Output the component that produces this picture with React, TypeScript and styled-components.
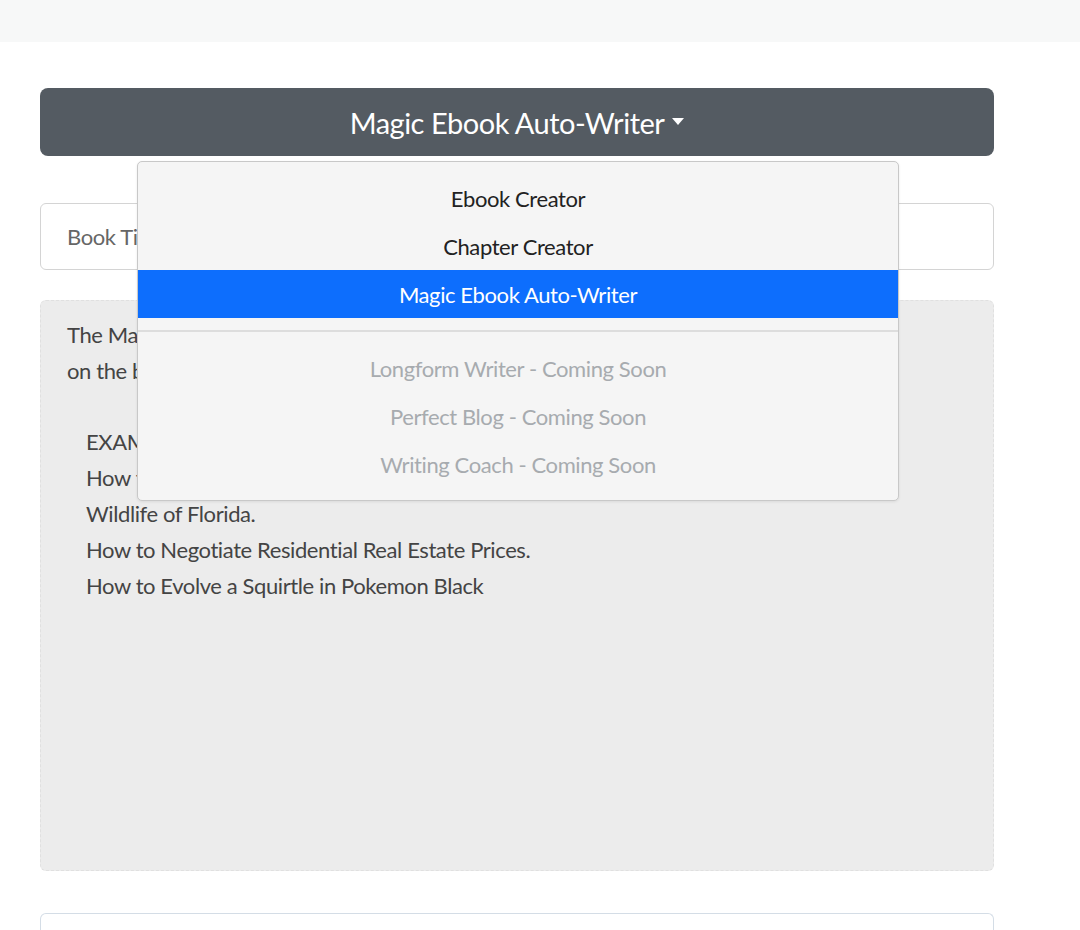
import React from "react";
import styled, { createGlobalStyle } from "styled-components";

const GlobalStyle = createGlobalStyle`
  body {
    margin: 0;
    background: #fff;
    font-family: Lato, "Open Sans", sans-serif;
    letter-spacing: -0.4px;
  }
`;

const TopBar = styled.div`
  height: 42px;
  background: #f7f8f8;
`;

const Main = styled.div`
  width: 954px;
  padding: 46px 0 0 40px;
  display: flex;
  flex-direction: column;
`;

const DropdownWrap = styled.div`
  position: relative;
`;

const ToggleButton = styled.button`
  width: 100%;
  height: 68px;
  border: none;
  border-radius: 8px;
  background: #545b62;
  color: #fff;
  font-family: inherit;
  letter-spacing: -0.5px;
  font-size: 29px;
  display: flex;
  align-items: center;
  justify-content: center;
  gap: 8px;
  &::after {
    content: "";
    border-top: 7px solid #fff;
    border-left: 6px solid transparent;
    border-right: 6px solid transparent;
    margin-top: -2px;
  }
`;

const Menu = styled.div`
  position: absolute;
  top: 73px;
  left: 97px;
  width: 760px;
  padding: 12px 0;
  background: #f5f5f5;
  border: 1px solid #c8c8c8;
  border-radius: 5px;
  box-shadow: 0 1px 3px rgba(0, 0, 0, 0.08);
  z-index: 10;
`;

const MenuItem = styled.div<{ $active?: boolean; $disabled?: boolean }>`
  height: 48px;
  display: flex;
  align-items: center;
  justify-content: center;
  font-size: 22px;
  background: ${(p) => (p.$active ? "#0d6efd" : "transparent")};
  color: ${(p) => (p.$active ? "#fff" : p.$disabled ? "#a7abaf" : "#222")};
`;

const Divider = styled.hr`
  margin: 12px 0;
  border: none;
  border-top: 2px solid #ddd;
`;

const TitleInput = styled.input`
  margin-top: 47px;
  height: 67px;
  box-sizing: border-box;
  border: 1px solid #d4d4d4;
  border-radius: 6px;
  padding: 0 26px;
  font-family: inherit;
  letter-spacing: -0.4px;
  font-size: 22px;
  color: #555;
  &::placeholder {
    color: #666;
  }
`;

const InfoBox = styled.div`
  margin-top: 30px;
  height: 571px;
  box-sizing: border-box;
  background: #ececec;
  border: 1px dashed #e0e0e0;
  border-radius: 6px;
  padding: 16px 40px 0 26px;
  font-size: 22px;
  line-height: 36px;
  color: #444;
`;

const ExampleList = styled.div`
  margin-top: 35px;
  padding-left: 19px;
`;

const BottomInput = styled.div`
  margin-top: 42px;
  height: 40px;
  border: 1px solid #d4dde6;
  border-bottom: none;
  border-radius: 6px 6px 0 0;
`;

export default function App() {
  return (
    <>
      <GlobalStyle />
      <TopBar />
      <Main>
        <DropdownWrap>
          <ToggleButton>Magic Ebook Auto-Writer</ToggleButton>
          <Menu>
            <MenuItem>Ebook Creator</MenuItem>
            <MenuItem>Chapter Creator</MenuItem>
            <MenuItem $active>Magic Ebook Auto-Writer</MenuItem>
            <Divider />
            <MenuItem $disabled>Longform Writer - Coming Soon</MenuItem>
            <MenuItem $disabled>Perfect Blog - Coming Soon</MenuItem>
            <MenuItem $disabled>Writing Coach - Coming Soon</MenuItem>
          </Menu>
        </DropdownWrap>
        <TitleInput placeholder="Book Title" />
        <InfoBox>
          The Magic Ebook Auto-Writer writes a full ebook for you, based
          <br />
          on the book title that you enter above.
          <ExampleList>
            <div>EXAMPLES:</div>
            <div>
              How to Identify and Photograph the Most Common Birds and
              <br />
              Wildlife of Florida.
            </div>
            <div>How to Negotiate Residential Real Estate Prices.</div>
            <div>How to Evolve a Squirtle in Pokemon Black</div>
          </ExampleList>
        </InfoBox>
        <BottomInput />
      </Main>
    </>
  );
}
